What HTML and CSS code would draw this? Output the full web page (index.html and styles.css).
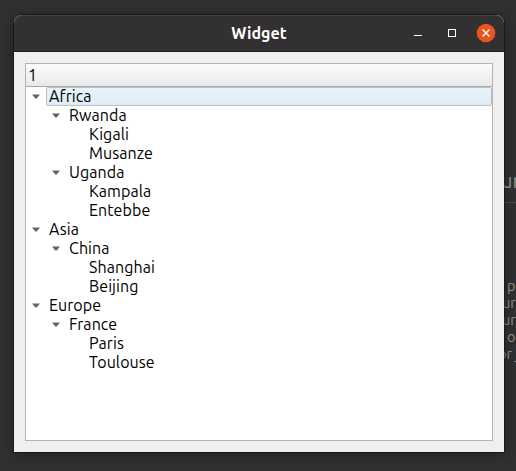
FILE: index.html
```
<!DOCTYPE html>
<html lang="en">
<head>
<meta charset="utf-8">
<title>Widget</title>
<link rel="stylesheet" href="styles.css">
</head>
<body>
<div class="backdrop">
  <div class="heading">ur</div>
  <div class="lines"><div class="in1">p</div><div>ur</div><div>ur</div><div class="in1">o</div><div class="out">or j</div></div>
</div>
<main class="window">
  <header class="titlebar">
    <h1>Widget</h1>
    <div class="controls">
      <svg class="min" width="8" height="8" viewBox="0 0 8 8"><path d="M0 6.5H8" stroke="#fff"/></svg>
      <svg class="max" width="8" height="8" viewBox="0 0 8 8"><rect x=".5" y=".5" width="7" height="7" fill="none" stroke="#fff"/></svg>
      <svg class="close" width="20" height="20" viewBox="0 0 20 20"><circle cx="10" cy="10" r="9.3" fill="#e95420"/><path d="M6.5 6.5L13.5 13.5M13.5 6.5L6.5 13.5" stroke="#fff" stroke-width="1.4"/></svg>
    </div>
  </header>
  <section class="content">
    <div class="tree">
      <div class="column">1</div>
      <div class="row l0 current"><svg class="arrow" viewBox="0 0 8 5"><path d="M0 .5H8L4.7 4.5H3.3Z"/></svg><span class="label">Africa</span></div>
      <div class="row l1"><svg class="arrow" viewBox="0 0 8 5"><path d="M0 .5H8L4.7 4.5H3.3Z"/></svg><span class="label">Rwanda</span></div>
      <div class="row l2"><span class="label">Kigali</span></div>
      <div class="row l2"><span class="label">Musanze</span></div>
      <div class="row l1"><svg class="arrow" viewBox="0 0 8 5"><path d="M0 .5H8L4.7 4.5H3.3Z"/></svg><span class="label">Uganda</span></div>
      <div class="row l2"><span class="label">Kampala</span></div>
      <div class="row l2"><span class="label">Entebbe</span></div>
      <div class="row l0"><svg class="arrow" viewBox="0 0 8 5"><path d="M0 .5H8L4.7 4.5H3.3Z"/></svg><span class="label">Asia</span></div>
      <div class="row l1"><svg class="arrow" viewBox="0 0 8 5"><path d="M0 .5H8L4.7 4.5H3.3Z"/></svg><span class="label">China</span></div>
      <div class="row l2"><span class="label">Shanghai</span></div>
      <div class="row l2"><span class="label">Beijing</span></div>
      <div class="row l0"><svg class="arrow" viewBox="0 0 8 5"><path d="M0 .5H8L4.7 4.5H3.3Z"/></svg><span class="label">Europe</span></div>
      <div class="row l1"><svg class="arrow" viewBox="0 0 8 5"><path d="M0 .5H8L4.7 4.5H3.3Z"/></svg><span class="label">France</span></div>
      <div class="row l2"><span class="label">Paris</span></div>
      <div class="row l2"><span class="label">Toulouse</span></div>
    </div>
  </section>
</main>
</body>
</html>
```
FILE: styles.css
```
* { box-sizing: border-box; }
html, body { height: 100%; margin: 0; overflow: hidden; }
body {
  display: flex;
  padding: 15px 12px 19px 14px;
  background: #2e3032;
  font-family: Ubuntu, "Noto Sans", sans-serif;
  font-size: 16px;
  color: #000;
}
.backdrop {
  position: absolute;
  top: 0;
  left: 501px;
  width: 15px;
  height: 471px;
  padding-top: 171px;
  overflow: hidden;
  color: #929495;
  white-space: nowrap;
}
.heading {
  height: 32px;
  border-bottom: 1px solid #4a4a4a;
  font-size: 20px;
  line-height: 20px;
}
.lines {
  padding: 74px 0 0 1px;
  font-size: 14.5px;
  line-height: 17px;
}
.in1 { padding-left: 5px; }
.out { margin-left: -4px; }
.window {
  position: relative;
  flex: 1;
  display: flex;
  flex-direction: column;
  border-radius: 8px 8px 0 0;
  background: #efefef;
  box-shadow: 0 0 0 1px rgba(0, 0, 0, .35), 0 2px 12px rgba(0, 0, 0, .4);
}
.titlebar {
  display: grid;
  grid-template-columns: 1fr auto 1fr;
  align-items: center;
  height: 37px;
  padding: 0 8px 1px 0;
  border-top: 1px solid #474341;
  border-bottom: 1px solid #1e1c1c;
  border-radius: 8px 8px 0 0;
  background: #333031;
}
.titlebar h1 {
  grid-column: 2;
  margin: 0 -4px 0 4px;
  font-size: 16px;
  line-height: 20px;
  color: #fff;
}
.controls {
  display: flex;
  justify-content: flex-end;
  align-items: center;
}
.controls svg { display: block; }
.min { margin-right: 26px; }
.max { margin-right: 20px; }
.content {
  flex: 1;
  display: flex;
  padding: 11px;
}
.tree {
  flex: 1;
  border: 1px solid #b4b4b4;
  background: #fff;
}
.column {
  height: 23px;
  padding-left: 2px;
  border-bottom: 1px solid #a9a9a9;
  background: linear-gradient(#fbfbfb, #e9e9e9);
  line-height: 22px;
}
.row {
  display: flex;
  align-items: center;
  height: 19px;
}
.l1 { padding-left: 20px; }
.l2 { padding-left: 60px; }
.arrow {
  flex: none;
  width: 8px;
  height: 5px;
  margin: 0 6px;
  fill: #666;
}
.label {
  flex: 1;
  height: 19px;
  padding-left: 3px;
  line-height: 18px;
  letter-spacing: .08px;
}
.current .label {
  padding-left: 2px;
  border: 1px solid #b2c3cd;
  border-radius: 2px;
  background: linear-gradient(#e7f4fc, #e1ebf3);
  line-height: 16px;
}
```
